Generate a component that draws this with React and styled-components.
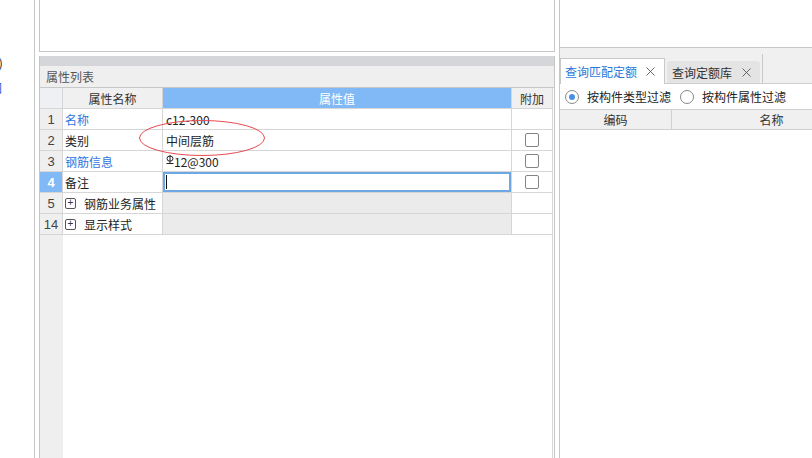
import styled, { createGlobalStyle } from 'styled-components';
import { X } from 'lucide-react';

const GlobalStyle = createGlobalStyle`
  * { box-sizing: border-box; }
  body {
    margin: 0;
    font-family: "Noto Sans CJK SC", "Liberation Sans", sans-serif;
    font-size: 12px;
    color: #222;
  }
`;

const rows = [
  { no: 1, name: '名称', link: true, value: 'c12-300' },
  { no: 2, name: '类别', value: '中间层筋', check: true },
  { no: 3, name: '钢筋信息', link: true, value: '12@300', rebar: true, check: true },
  { no: 4, name: '备注', value: '', check: true, active: true },
  { no: 5, name: '钢筋业务属性', group: true },
  { no: 14, name: '显示样式', group: true },
];

function RebarMark() {
  return (
    <RebarSvg width="8" height="9" viewBox="0 0 8 9">
      <ellipse cx="4" cy="3.6" rx="3" ry="2.6" fill="none" stroke="#222" strokeWidth="1" />
      <line x1="4" y1="0" x2="4" y2="8" stroke="#222" strokeWidth="1" />
      <line x1="0.5" y1="8.5" x2="7.5" y2="8.5" stroke="#222" strokeWidth="1" />
    </RebarSvg>
  );
}

export default function App() {
  return (
    <Page>
      <GlobalStyle />
      <Stub>
        <StubText>(0)</StubText>
        <StubText $blue>图</StubText>
      </Stub>

      <LeftMain>
        <TopPane />
        <PropPanel>
          <Band />
          <PanelTitle>属性列表</PanelTitle>
          <TableWrap>
            <HeadRow>
              <HeadCell $corner />
              <HeadCell>属性名称</HeadCell>
              <HeadCell $active>属性值</HeadCell>
              <HeadCell $last>附加</HeadCell>
            </HeadRow>
            {rows.map((row) => (
              <Row key={row.no}>
                <NumCell $active={row.active}>{row.no}</NumCell>
                <NameCell $link={row.link}>
                  {row.group && <Expand>+</Expand>}
                  {row.name}
                </NameCell>
                <ValueCell $group={row.group} $active={row.active}>
                  {row.rebar && <RebarMark />}
                  {row.value}
                  {row.active && <Caret />}
                </ValueCell>
                <AttachCell>{row.check && <Check />}</AttachCell>
              </Row>
            ))}
          </TableWrap>
        </PropPanel>
      </LeftMain>

      <RightMain>
        <TopPane $right />
        <TabStrip>
          <Tab $active>
            查询匹配定额
            <X size={15} strokeWidth={1.4} color="#555" />
          </Tab>
          <Tab>
            查询定额库
            <X size={15} strokeWidth={1.4} color="#555" />
          </Tab>
          <TabDivider />
        </TabStrip>
        <RadioRow>
          <Radio $checked />
          <RadioLabel>按构件类型过滤</RadioLabel>
          <Radio />
          <RadioLabel>按构件属性过滤</RadioLabel>
        </RadioRow>
        <ListHead>
          <ListHeadCell $w={112}>编码</ListHeadCell>
          <ListHeadCell $w={200}>名称</ListHeadCell>
        </ListHead>
      </RightMain>

      <Mark width="128" height="38" viewBox="0 0 128 38">
        <ellipse cx="64" cy="19" rx="62.5" ry="17.5" fill="none" stroke="#e64b4f" strokeWidth="1" />
      </Mark>
    </Page>
  );
}

const Page = styled.div`
  position: relative;
  display: flex;
  width: 812px;
  height: 458px;
  overflow: hidden;
  background: #fff;
`;

const Stub = styled.div`
  width: 35px;
  flex-shrink: 0;
  border-right: 1px solid #c6c6c6;
  overflow: hidden;
  display: flex;
  flex-direction: column;
  padding-top: 55px;
  gap: 9px;
`;

const StubText = styled.span`
  display: block;
  white-space: nowrap;
  line-height: 16px;
  font-size: 12px;
  margin-left: ${(p) => (p.$blue ? '-10px' : '-12px')};
  color: ${(p) => (p.$blue ? '#2457d6' : '#111')};
`;

const LeftMain = styled.div`
  width: 516px;
  margin-left: 4px;
  flex-shrink: 0;
  display: flex;
  flex-direction: column;
`;

const TopPane = styled.div`
  height: ${(p) => (p.$right ? '48px' : '52px')};
  flex-shrink: 0;
  background: #fff;
  border: 1px solid #c6c6c6;
  border-top: none;
  ${(p) => p.$right && 'border-left: none; border-right: none;'}
`;

const PropPanel = styled.div`
  flex: 1;
  margin-top: 4px;
  display: flex;
  flex-direction: column;
  border-left: 1px solid #c6c6c6;
  border-right: 1px solid #c6c6c6;
`;

const Band = styled.div`
  height: 10px;
  background: #d5d6da;
`;

const PanelTitle = styled.div`
  height: 22px;
  line-height: 21px;
  padding-left: 6px;
  background: #efefef;
  border-bottom: 1px solid #c8c8c8;
  color: #555;
`;

const TableWrap = styled.div`
  flex: 1;
  width: 513px;
  border-right: 1px solid #d6d6d6;
  background: linear-gradient(to right, #efefef 23px, #fff 23px);
`;

const Grid = styled.div`
  display: grid;
  grid-template-columns: 23px 100px 349px 40px;
`;

const HeadRow = styled(Grid)`
  height: 21px;
`;

const Row = styled(Grid)`
  height: 21px;
`;

const Cell = styled.div`
  display: flex;
  align-items: center;
  border-bottom: 1px solid #d6d6d6;
  border-right: 1px solid #d6d6d6;
  white-space: nowrap;
  overflow: hidden;
`;

const HeadCell = styled(Cell)`
  justify-content: center;
  color: ${(p) => (p.$active ? '#fff' : '#333')};
  background: ${(p) => (p.$active ? '#80b9f5' : p.$corner ? '#eef0f4' : '#f0f0f0')};
  ${(p) => p.$last && 'border-right: none;'}
`;

const NumCell = styled(Cell)`
  justify-content: center;
  font-family: "Liberation Sans", sans-serif;
  font-size: 13px;
  color: ${(p) => (p.$active ? '#fff' : '#444')};
  font-weight: ${(p) => (p.$active ? 'bold' : 'normal')};
  background: ${(p) => (p.$active ? '#80b9f5' : '#efefef')};
`;

const NameCell = styled(Cell)`
  padding-left: 2px;
  background: #fff;
  color: ${(p) => (p.$link ? '#2f74e0' : '#222')};
`;

const ValueCell = styled(Cell)`
  padding-left: 3px;
  background: ${(p) => (p.$group ? '#ebebeb' : '#fff')};
  ${(p) => p.$active && 'box-shadow: inset 0 0 0 2px #6ea8e4;'}
`;

const AttachCell = styled(Cell)`
  justify-content: center;
  border-right: none;
  background: #fff;
`;

const Check = styled.span`
  width: 14px;
  height: 14px;
  border: 1px solid #848484;
  border-radius: 2px;
  background: #fff;
`;

const Expand = styled.span`
  display: inline-flex;
  align-items: center;
  justify-content: center;
  width: 11px;
  height: 11px;
  margin-right: 8px;
  border: 1px solid #555;
  border-radius: 2px;
  font-family: "Liberation Sans", sans-serif;
  font-size: 10px;
  line-height: 1;
  color: #333;
`;

const Caret = styled.span`
  width: 1px;
  height: 14px;
  background: #111;
`;

const RebarSvg = styled.svg`
  align-self: flex-start;
  margin-top: 4px;
`;

const RightMain = styled.div`
  flex: 1;
  margin-left: 4px;
  border-left: 1px solid #c6c6c6;
  display: flex;
  flex-direction: column;
  overflow: hidden;
`;

const TabStrip = styled.div`
  height: 36px;
  display: flex;
  align-items: flex-end;
  background: #f0f0f0;
  border-bottom: 1px solid #cfcfcf;
`;

const Tab = styled.div`
  display: flex;
  align-items: center;
  justify-content: space-between;
  flex-shrink: 0;
  white-space: nowrap;
  padding: 0 6px 0 4px;
  ${(p) =>
    p.$active
      ? `
    width: 105px;
    height: 26px;
    margin-bottom: -1px;
    background: #fff;
    color: #2a78d8;
    border: 1px solid #c8c8c8;
    border-bottom: none;
  `
      : `
    width: 93px;
    height: 22px;
    margin-left: 2px;
    background: #e4e4e4;
    color: #333;
    border-radius: 3px 3px 0 0;
    padding-left: 5px;
  `}
`;

const TabDivider = styled.div`
  width: 1px;
  height: 29px;
  margin-left: 2px;
  background: #c8c8c8;
`;

const RadioRow = styled.div`
  height: 25px;
  display: flex;
  align-items: center;
  padding-left: 5px;
  background: #fff;
  white-space: nowrap;
`;

const Radio = styled.span`
  position: relative;
  width: 14px;
  height: 14px;
  flex-shrink: 0;
  border: 1px solid #8a8a8a;
  border-radius: 50%;
  background: #fff;
  margin-left: ${(p) => (p.$checked ? '0' : '9px')};
  &::after {
    content: '';
    display: ${(p) => (p.$checked ? 'block' : 'none')};
    position: absolute;
    left: 3px;
    top: 3px;
    width: 6px;
    height: 6px;
    border-radius: 50%;
    background: #4a90e2;
  }
`;

const RadioLabel = styled.span`
  margin-left: 8px;
  color: #222;
`;

const ListHead = styled.div`
  height: 21px;
  display: flex;
  background: #f0f0f0;
  border-top: 1px solid #d0d0d0;
  border-bottom: 1px solid #d0d0d0;
`;

const ListHeadCell = styled.div`
  width: ${(p) => p.$w}px;
  flex-shrink: 0;
  display: flex;
  align-items: center;
  justify-content: center;
  border-right: 1px solid #d0d0d0;
  color: #333;
`;

const Mark = styled.svg`
  position: absolute;
  left: 138px;
  top: 119px;
  pointer-events: none;
`;
